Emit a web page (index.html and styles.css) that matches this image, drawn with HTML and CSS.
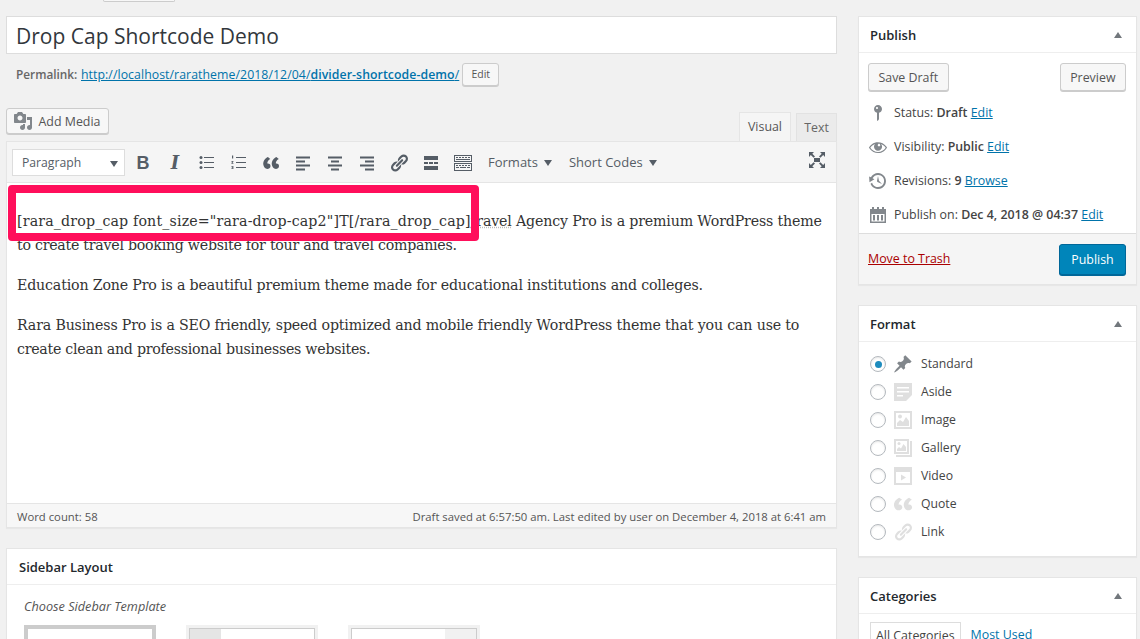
FILE: index.html
```html
<!DOCTYPE html>
<html lang="en">
<head>
<meta charset="utf-8">
<title>Edit Post</title>
<link rel="stylesheet" href="styles.css">
</head>
<body>
<svg class="sprite" aria-hidden="true">
  <symbol id="i-media" viewBox="0 0 20 20"><path d="M13 11V4c0-.55-.45-1-1-1h-1.67L9 1H5L3.67 3H2c-.55 0-1 .45-1 1v7c0 .55.45 1 1 1h10c.55 0 1-.45 1-1zM7 4.500c1.380 0 2.500 1.120 2.500 2.500S8.380 9.500 7 9.500 4.500 8.380 4.500 7 5.620 4.500 7 4.500zM14 6h5v10.500c0 1.380-1.120 2.500-2.500 2.500S14 17.880 14 16.500s1.120-2.500 2.500-2.500c.17 0 .34.02.5.05V9h-3V6zm-4 8.050V13h2v3.500c0 1.380-1.120 2.500-2.500 2.500S7 17.880 7 16.500 8.120 14 9.500 14c.17 0 .34.02.5.05z"/></symbol>
  <symbol id="i-ul" viewBox="0 0 20 20"><circle cx="4" cy="4.500" r="1.500"/><circle cx="4" cy="9.500" r="1.500"/><circle cx="4" cy="14.500" r="1.500"/><path d="M7 4h10v1H7zM7 9h10v1H7zM7 14h10v1H7z"/></symbol>
  <symbol id="i-ol" viewBox="0 0 20 20"><path d="M7 4h10v1H7zM7 9h10v1H7zM7 14h10v1H7z"/><path d="M3 2.500h1.200v3H3zM2.400 8h2v.8L3.400 10h1v.8h-2V10l1-1.200h-1zM2.400 13h2v3h-2v-.7h1.200V15H2.800v-.7h.8v-.6H2.400z"/></symbol>
  <symbol id="i-quote" viewBox="0 0 20 20"><path d="M9.490 13.220c0-.74-.2-1.380-.61-1.900-.62-.78-1.830-.88-2.530-.72-.29-1.650 1.110-3.750 2.920-4.650L6.880 4C4.160 5.300 1.810 8.330 2.300 11.610 2.630 13.760 3.830 16 6.490 16c1.100 0 3-1.120 3-2.780z"/><path d="M18 13.220c0-.74-.2-1.380-.61-1.900-.62-.78-1.830-.88-2.530-.72-.29-1.650 1.110-3.750 2.920-4.650L15.390 4c-2.720 1.300-5.070 4.330-4.580 7.610.33 2.150 1.530 4.390 4.190 4.390 1.100 0 3-1.120 3-2.780z"/></symbol>
  <symbol id="i-quote-wide" viewBox="0 0 20 20"><g transform="translate(-1.600 -.6) scale(1.150 1.060)"><path d="M9.490 13.220c0-.74-.2-1.380-.61-1.900-.62-.78-1.830-.88-2.530-.72-.29-1.650 1.110-3.750 2.920-4.650L6.880 4C4.160 5.300 1.810 8.330 2.300 11.610 2.630 13.760 3.830 16 6.490 16c1.100 0 3-1.120 3-2.780z"/><path d="M18 13.220c0-.74-.2-1.380-.61-1.900-.62-.78-1.830-.88-2.530-.72-.29-1.650 1.110-3.750 2.920-4.650L15.390 4c-2.720 1.300-5.070 4.330-4.580 7.610.33 2.150 1.530 4.390 4.190 4.390 1.100 0 3-1.120 3-2.780z"/></g></symbol>
  <symbol id="i-left" viewBox="0 0 20 20"><path d="M3 3h14v2H3zM3 7h9v2H3zM3 11h14v2H3zM3 15h9v2H3z" transform="translate(0 .5)"/></symbol>
  <symbol id="i-center" viewBox="0 0 20 20"><path d="M3 3h14v2H3zM6 7h8v2H6zM3 11h14v2H3zM6 15h8v2H6z" transform="translate(0 .5)"/></symbol>
  <symbol id="i-right" viewBox="0 0 20 20"><path d="M3 3h14v2H3zM8 7h9v2H8zM3 11h14v2H3zM8 15h9v2H8z" transform="translate(0 .5)"/></symbol>
  <symbol id="i-link" viewBox="0 0 20 20"><path d="M17.740 2.760c1.680 1.690 1.680 4.410 0 6.100l-1.530 1.520c-1.120 1.120-2.700 1.470-4.140 1.090l2.620-2.610.76-.77.76-.76c.84-.84.84-2.200 0-3.040-.84-.85-2.200-.85-3.040 0l-.77.76-3.380 3.380c-.37-1.440-.02-3.020 1.100-4.140l1.520-1.530c1.690-1.680 4.420-1.680 6.100 0zM8.590 13.430l5.340-5.340c.42-.42.42-1.100 0-1.520-.44-.43-1.130-.39-1.530 0l-5.330 5.340c-.42.42-.42 1.100 0 1.520.44.43 1.130.39 1.520 0zm-.76 2.290l4.140-4.150c.38 1.440.03 3.020-1.090 4.140l-1.520 1.530c-1.690 1.680-4.410 1.680-6.100 0-1.680-1.680-1.680-4.420 0-6.100l1.530-1.520c1.120-1.120 2.700-1.470 4.140-1.100l-4.140 4.150c-.85.84-.85 2.200 0 3.050.84.84 2.200.84 3.040 0z"/></symbol>
  <symbol id="i-more" viewBox="0 0 20 20"><path d="M3 3h14v4H3zM3 13h14v4H3zM3 9h4v2H3zM8 9h4v2H8zM13 9h4v2h-4z"/></symbol>
  <symbol id="i-kitchen" viewBox="0 0 20 20"><path d="M1 2h18v7H1zm1 1v5h16V3zM1 10h18v8H1zm1 1v6h16v-6z" fill-rule="evenodd"/><path d="M3 4h2v1H3zM6 4h2v1H6zM9 4h2v1H9zM12 4h2v1h-2zM15 4h2v1h-2zM3 6h14v1H3zM3 12h2v1H3zM6 12h2v1H6zM9 12h2v1H9zM12 12h2v1h-2zM15 12h2v1h-2zM3 14h3v1H3zM7 14h6v1H7zM14 14h3v1h-3z"/></symbol>
  <symbol id="i-full" viewBox="0 0 20 20"><path d="M7 8h6v4H7zM2 2h5L5.300 3.700 8 6.500 6.600 7.800 3.800 5.100 2 7zM18 2v5l-1.800-1.900-2.800 2.700L12 6.500l2.700-2.800L13 2zM2 18v-5l1.800 1.900 2.800-2.700L8 13.500l-2.700 2.800L7 18zM18 18h-5l1.700-1.700-2.700-2.800 1.400-1.300 2.800 2.700L18 13z"/></symbol>
  <symbol id="i-status" viewBox="0 0 20 20"><path d="M14 6c0 1.860-1.280 3.410-3 3.860V16c0 1-2 2-2 2V9.860c-1.720-.45-3-2-3-3.860 0-2.210 1.790-4 4-4s4 1.790 4 4zM8 5c0 .55.45 1 1 1s1-.45 1-1-.45-1-1-1-1 .45-1 1z"/></symbol>
  <symbol id="i-eye" viewBox="0 0 20 20"><path d="M18.300 9.500C15 4.900 8.500 3.800 3.900 7.200c-1.200.9-2.200 2.100-3 3.400.2.4.5.8.8 1.200 3.300 4.600 9.600 5.600 14.200 2.400.9-.7 1.700-1.400 2.400-2.400.3-.4.5-.8.8-1.200-.3-.4-.5-.8-.8-1.100zm-8.200-2.300c.5-.5 1.300-.5 1.800 0s.5 1.300 0 1.800-1.300.5-1.800 0-.5-1.300 0-1.800zm-.1 7.700c-3.100 0-6-1.600-7.700-4.200C3.500 9 5.100 7.800 7 7c-.7.8-1 1.700-1 2.700 0 2.200 1.700 4.100 4 4.100 2.200 0 4.100-1.700 4.100-4v-.1c0-1-.4-2-1.100-2.700 1.900.8 3.500 2 4.700 3.700-1.700 2.600-4.600 4.200-7.700 4.200z"/></symbol>
  <symbol id="i-backup" viewBox="0 0 20 20"><path d="M13.650 2.880c3.930 2.010 5.480 6.840 3.470 10.770s-6.830 5.480-10.770 3.470c-1.870-.96-3.200-2.560-3.860-4.400l1.640-1.030c.45 1.570 1.520 2.950 3.080 3.760 3.010 1.540 6.690.35 8.230-2.660 1.550-3.010.36-6.690-2.650-8.240C9.780 3.010 6.100 4.200 4.560 7.210l1.880.97-4.950 3.080-.39-5.820 1.780.91C4.900 2.400 9.750.89 13.650 2.880zm-4.360 7.830C9.110 10.530 9 10.280 9 10c0-.07.03-.12.04-.19h-.01L10 5l.97 4.810L14 13l-4.500-2.120.02-.02c-.08-.04-.16-.09-.23-.15z"/></symbol>
  <symbol id="i-cal" viewBox="0 0 20 20"><path fill-rule="evenodd" d="M2 4h2V2h2v2h3V2h2v2h3V2h2v2h2v14H2zm1.500 5v7.500h13V9z"/><path d="M5 10h2v5.500H5zM9 10h2v5.500H9zM13 10h2v5.500h-2z"/></symbol>
  <symbol id="i-pin" viewBox="0 0 20 20"><path d="M10.440 3.020l1.820-1.820 6.360 6.350-1.830 1.820c-1.050-.68-2.480-.57-3.410.36l-.75.75c-.92.93-1.040 2.350-.35 3.410l-1.830 1.820-2.410-2.410-2.800 2.790c-.42.42-3.380 2.710-3.800 2.290s1.860-3.390 2.280-3.810l2.790-2.790L4.100 9.360l1.830-1.820c1.050.69 2.480.57 3.400-.36l.75-.75c.93-.92 1.050-2.350.36-3.410z"/></symbol>
  <symbol id="i-aside" viewBox="0 0 20 20"><path fill-rule="evenodd" d="M1 1h18v12l-6 6H1zM4 5v1.500h12V5zM4 9v1.500h12V9zM4 13v1.500h6V13z"/></symbol>
  <symbol id="i-image" viewBox="0 0 20 20"><path fill-rule="evenodd" d="M1 1h18v18H1zm2 2v14h14V3z"/><path d="M4 16v-3l3-3 3 2 3-5 3 4v5z"/><circle cx="7" cy="6.500" r="2"/></symbol>
  <symbol id="i-gallery" viewBox="0 0 20 20"><path fill-rule="evenodd" d="M1 1h15v15H1zm2 2v11h11V3z"/><path d="M4 13v-2l2-2 2 1.500L10.500 6 13 9v4z"/><circle cx="6" cy="5.500" r="1.500"/><path d="M17 3h2v16H3v-2h14z"/></symbol>
  <symbol id="i-video" viewBox="0 0 20 20"><path fill-rule="evenodd" d="M1 1h18v18H1zm2 5v11h14V6z"/><path d="M8 8.500l5 3-5 3z"/></symbol>
</svg>

<div class="top-stub"></div>
<div class="page">
  <main class="main">
    <div class="title-box">Drop Cap Shortcode Demo</div>
    <div class="permalink">
      <strong>Permalink:</strong>
      <a href="#">http://localhost/raratheme/2018/12/04/<b>divider-shortcode-demo</b>/</a>
      <span class="btn btn-mini">Edit</span>
    </div>
    <div class="editor-top">
      <span class="btn btn-media"><svg class="ic-media"><use href="#i-media"/></svg><span class="btn-label">Add Media</span></span>
      <div class="tabs">
        <span class="tab tab-active">Visual</span>
        <span class="tab">Text</span>
      </div>
    </div>
    <section class="editor">
      <div class="toolbar">
        <div class="format-select">Paragraph<i class="caret caret-dark"></i></div>
        <div class="tool-group">
          <span class="tool tool-b">B</span>
          <span class="tool tool-i">I</span>
          <span class="tool"><svg><use href="#i-ul"/></svg></span>
          <span class="tool"><svg><use href="#i-ol"/></svg></span>
          <span class="tool"><svg><use href="#i-quote"/></svg></span>
          <span class="tool"><svg><use href="#i-left"/></svg></span>
          <span class="tool"><svg><use href="#i-center"/></svg></span>
          <span class="tool"><svg><use href="#i-right"/></svg></span>
          <span class="tool"><svg><use href="#i-link"/></svg></span>
          <span class="tool"><svg><use href="#i-more"/></svg></span>
          <span class="tool"><svg><use href="#i-kitchen"/></svg></span>
        </div>
        <span class="menu menu-formats">Formats<i class="caret"></i></span>
        <span class="menu menu-codes">Short Codes<i class="caret"></i></span>
        <svg class="ic-full"><use href="#i-full"/></svg>
      </div>
      <div class="content">
        <p><span class="code">[rara_drop_cap font_size="rara-drop-cap2"]T[/rara_drop_cap]</span><span class="spell">travel</span> Agency Pro is a premium WordPress theme <span class="tight">to create travel booking website for tour and travel companies.</span></p>
        <p>Education Zone Pro is a beautiful premium theme made for educational institutions and colleges.</p>
        <p>Rara Business Pro is a SEO friendly, speed optimized and mobile friendly WordPress theme that you can use to <span class="tight">create clean and professional businesses websites.</span></p>
      </div>
      <div class="status-bar">
        <span>Word count: 58</span>
        <span>Draft saved at 6:57:50 am. Last edited by user on December 4, 2018 at 6:41 am</span>
      </div>
      <div class="highlight"></div>
    </section>
    <section class="box box-layout">
      <h2 class="box-head">Sidebar Layout</h2>
      <div class="layout-body">
        <em class="layout-label">Choose Sidebar Template</em>
        <div class="thumbs">
          <div class="thumb thumb-on"><div class="thumb-in"></div></div>
          <div class="thumb"><div class="thumb-in"><span class="side side-l"></span></div></div>
          <div class="thumb"><div class="thumb-in thumb-r"><span class="side side-r"></span></div></div>
        </div>
      </div>
    </section>
  </main>

  <aside class="sidebar">
    <section class="box box-publish">
      <h2 class="box-head">Publish<i class="caret-up"></i></h2>
      <div class="pub-actions">
        <span class="btn btn-side">Save Draft</span>
        <span class="btn btn-side">Preview</span>
      </div>
      <ul class="pub-rows">
        <li><svg><use href="#i-status"/></svg><span>Status: <b>Draft</b> <a href="#">Edit</a></span></li>
        <li><svg><use href="#i-eye"/></svg><span>Visibility: <b>Public</b> <a href="#">Edit</a></span></li>
        <li><svg><use href="#i-backup"/></svg><span>Revisions: <b>9</b> <a href="#">Browse</a></span></li>
        <li><svg><use href="#i-cal"/></svg><span>Publish on: <b>Dec 4, 2018 @ 04:37</b> <a href="#">Edit</a></span></li>
      </ul>
      <div class="pub-foot">
        <a class="trash" href="#">Move to Trash</a>
        <span class="btn btn-primary">Publish</span>
      </div>
    </section>
    <section class="box box-format">
      <h2 class="box-head">Format<i class="caret-up"></i></h2>
      <ul class="formats">
        <li><i class="radio radio-on"></i><svg class="ic-dark"><use href="#i-pin"/></svg>Standard</li>
        <li><i class="radio"></i><svg><use href="#i-aside"/></svg>Aside</li>
        <li><i class="radio"></i><svg><use href="#i-image"/></svg>Image</li>
        <li><i class="radio"></i><svg><use href="#i-gallery"/></svg>Gallery</li>
        <li><i class="radio"></i><svg><use href="#i-video"/></svg>Video</li>
        <li><i class="radio"></i><svg><use href="#i-quote-wide"/></svg>Quote</li>
        <li><i class="radio"></i><svg><use href="#i-link"/></svg>Link</li>
      </ul>
    </section>
    <section class="box box-cats">
      <h2 class="box-head">Categories<i class="caret-up"></i></h2>
      <div class="cat-tabs">
        <span class="cat-tab cat-on">All Categories</span>
        <a class="cat-tab" href="#">Most Used</a>
      </div>
    </section>
  </aside>
</div>
</body>
</html>
```

FILE: styles.css
```css
* { box-sizing: border-box; }
html, body { margin: 0; height: 639px; overflow: hidden; }
body { background: #f1f1f1; color: #444; font: 12.4px/1.4 "Open Sans", sans-serif; }
a { color: #0073aa; }
ul { list-style: none; margin: 0; padding: 0; }
.sprite { display: none; }

.top-stub { width: 72px; height: 2px; margin-left: 103px; background: #f7f7f7; border: 1px solid #ccc; border-top: 0; border-radius: 0 0 3px 3px; }
.page { display: flex; gap: 21px; padding: 14px 0 0 6px; align-items: flex-start; }
.main { width: 831px; flex: none; }
.sidebar { width: 279px; flex: none; }

.title-box { height: 38px; background: #fff; border: 1px solid #ddd; padding: 0 9px; font-size: 21px; line-height: 38px; color: #32373c; }

.permalink { display: flex; align-items: center; height: 24px; margin-top: 8px; padding: 1px 0 0 10px; font-size: 12.3px; color: #666; }
.permalink strong { width: 65px; flex: none; font-size: 11.8px; font-weight: 600; }
.permalink b { font-weight: 600; }
.permalink a { margin-right: 3px; letter-spacing: .06px; }

.btn { display: inline-flex; align-items: center; justify-content: center; background: #f7f7f7; border: 1px solid #ccc; border-radius: 3px; box-shadow: 0 1px 0 #ccc; color: #555; }
.btn-mini { width: 37px; height: 23px; margin-top: -1px; font-size: 10.5px; }
.btn-media { width: 103px; height: 26px; margin-top: 8px; }
.btn-label { padding-top: 1px; }
.ic-media { width: 20px; height: 20px; margin-right: 6px; margin-left: -2px; fill: #82878c; }

.editor-top { display: flex; justify-content: space-between; height: 55px; padding-top: 14px; }
.tabs { display: flex; gap: 5px; align-items: flex-end; }
.tab { width: 41px; height: 28px; background: #ebebeb; border: 1px solid #e2e2e2; border-bottom: 0; line-height: 28px; text-align: center; color: #666; }
.tab-active { width: 52px; height: 29px; background: #f5f5f5; border-color: #e5e5e5; position: relative; z-index: 1; color: #555; }

.editor { position: relative; height: 387px; border: 1px solid #e5e5e5; background: #fff; display: flex; flex-direction: column; box-shadow: 0 1px 1px rgba(0,0,0,.04); }
.toolbar { display: flex; align-items: center; height: 41px; flex: none; background: #f5f5f5; border-bottom: 1px solid #e5e5e5; padding: 1px 0 0 5px; color: #555d66; position: relative; font-size: 13px; }
.format-select { width: 113px; height: 27px; background: #fff; border: 1px solid #ddd; padding-left: 9px; line-height: 25px; color: #555d66; position: relative; font-size: 12.2px; flex: none; }
.caret { display: inline-block; margin-left: 6px; vertical-align: 1px; border: 4.500px solid transparent; border-top: 6px solid #555d66; border-bottom: 0; }
.caret-dark { position: absolute; right: 6px; top: 11px; }
.tool-group { display: flex; margin-left: 2px; flex: none; }
.tool { width: 32px; height: 24px; display: flex; align-items: center; justify-content: center; color: #555d66; }
.tool svg { width: 20px; height: 20px; fill: #555d66; }
.tool-b { font: 700 18px/1 "Liberation Sans", sans-serif; }
.tool-i { font: italic 700 18px/1 "DejaVu Serif", serif; }
.menu { flex: none; color: #555d66; }
.menu-formats { margin-left: 9px; }
.menu-codes { margin-left: 17px; }
.ic-full { width: 20px; height: 20px; fill: #555d66; margin-left: auto; margin-right: 9px; margin-top: -5px; }

.content { flex: 1; padding: 10px 10px 0; font: 14.200px/24px "DejaVu Serif", serif; color: #333; letter-spacing: -.167px; }
.content p { margin: 16px 0; }
.code { letter-spacing: .155px; }
.tight { letter-spacing: -.26px; }
.spell { text-decoration: underline dotted #bbb; }
.status-bar { display: flex; justify-content: space-between; height: 24px; flex: none; padding: 1px 10px 0; background: #f7f7f7; border-top: 1px solid #e5e5e5; font-size: 11.3px; line-height: 24px; color: #555; }
.highlight { position: absolute; left: 1px; top: 43px; width: 471px; height: 56px; border: 8px solid #ff0f5b; border-radius: 4px; }

.box { background: #fff; border: 1px solid #e5e5e5; box-shadow: 0 1px 1px rgba(0,0,0,.04); }
.box-head { position: relative; margin: 0; height: 36px; padding: 0 12px; border-bottom: 1px solid #eee; font-size: 13px; font-weight: 600; line-height: 36px; color: #23282d; }
.sidebar .box-head { padding-left: 11px; }
.caret-up { position: absolute; right: 14px; top: 15px; border: 4.500px solid transparent; border-bottom: 6px solid #72777c; border-top: 0; }

.box-layout { margin-top: 20px; height: 120px; }
.layout-body { padding: 12px 17px 0; }
.layout-label { display: block; font-size: 12.700px; line-height: 18px; color: #555; }
.thumbs { display: flex; gap: 30px; margin-top: 10px; }
.thumb { width: 132px; height: 60px; background: #f1f1f1; padding: 3px; }
.thumb-on { background: #ccc; }
.thumb-in { height: 60px; background: #fff; border: 1px solid #ccc; display: flex; }
.thumb-r { justify-content: flex-end; }
.side { width: 31px; background: #e5e5e5; display: block; }
.side-r { background: #f1f1f1; }

.box-publish { height: 269px; display: flex; flex-direction: column; }
.pub-actions { display: flex; justify-content: space-between; padding: 10px 10px 0 9px; }
.btn-side { height: 28px; padding: 1px 9.500px 0; }
.pub-rows { padding: 5px 0 0 9px; }
.pub-rows li { display: flex; align-items: center; height: 34px; }
.pub-rows svg { width: 20px; height: 20px; margin-right: 6px; fill: #82878c; flex: none; }
.pub-rows b { font-weight: 600; }
.pub-foot { margin-top: auto; height: 51px; display: flex; justify-content: space-between; align-items: center; padding: 0 10px 0 9px; background: #f5f5f5; border-top: 1px solid #ddd; }
.trash { color: #a00; }
.btn-primary { width: 67px; height: 31px; padding-top: 1px; background: #0085ba; border-color: #006799; box-shadow: 0 1px 0 #006799; color: #fff; }

.box-format { margin-top: 20px; height: 252px; }
.formats { padding: 8px 0 0 11px; font-size: 12.2px; }
.formats li { display: flex; align-items: center; height: 28px; color: #444; }
.formats svg { width: 20px; height: 20px; margin-right: 8px; fill: #dfdfdf; flex: none; }
.formats .ic-dark { fill: #82878c; }
.radio { width: 16px; height: 16px; margin-right: 7px; border: 1px solid #b4b9be; border-radius: 50%; background: #fff; box-shadow: inset 0 1px 2px rgba(0,0,0,.1); position: relative; flex: none; }
.radio-on::after { content: ""; position: absolute; left: 3.500px; top: 3.500px; width: 7px; height: 7px; border-radius: 50%; background: #1e8cbe; }

.box-cats { margin-top: 20px; height: 90px; }
.cat-tabs { display: flex; align-items: flex-start; padding: 8px 0 0 11px; }
.cat-tab { padding: 4px 5px 0; height: 40px; text-decoration: none; }
.cat-on { border: 1px solid #ddd; background: #fff; margin-right: 5px; }
```
